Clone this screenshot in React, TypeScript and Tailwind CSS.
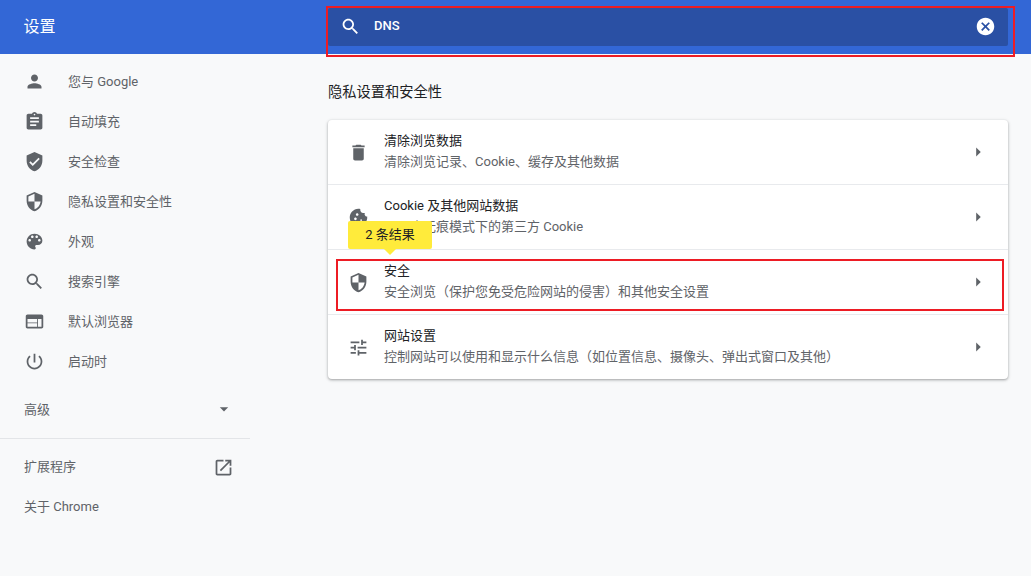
import React from 'react';

// material icon paths
const icons: Record<string, string> = {
  person: 'M12 12c2.21 0 4-1.79 4-4s-1.79-4-4-4-4 1.79-4 4 1.79 4 4 4zm0 2c-2.67 0-8 1.34-8 4v2h16v-2c0-2.66-5.33-4-8-4z',
  assignment: 'M19 3h-4.18C14.4 1.84 13.3 1 12 1c-1.3 0-2.4.84-2.82 2H5c-1.1 0-2 .9-2 2v14c0 1.1.9 2 2 2h14c1.1 0 2-.9 2-2V5c0-1.1-.9-2-2-2zm-7 0c.55 0 1 .45 1 1s-.45 1-1 1-1-.45-1-1 .45-1 1-1zm2 14H7v-2h7v2zm3-4H7v-2h10v2zm0-4H7V7h10v2z',
  verified: 'M12 1L3 5v6c0 5.55 3.84 10.74 9 12 5.16-1.26 9-6.45 9-12V5l-9-4zm-2 16l-4-4 1.41-1.41L10 14.17l6.59-6.59L18 9l-8 8z',
  security: 'M12 1L3 5v6c0 5.55 3.84 10.74 9 12 5.16-1.26 9-6.45 9-12V5l-9-4zm0 10.99h7c-.53 4.12-3.28 7.79-7 8.94V12H5V6.3l7-3.11v8.8z',
  palette: 'M12 3c-4.97 0-9 4.03-9 9s4.03 9 9 9c.83 0 1.5-.67 1.5-1.5 0-.39-.15-.74-.39-1.01-.23-.26-.38-.61-.38-.99 0-.83.67-1.5 1.5-1.5H16c2.76 0 5-2.24 5-5 0-4.42-4.03-8-9-8zm-5.5 9c-.83 0-1.5-.67-1.5-1.5S5.67 9 6.5 9 8 9.67 8 10.5 7.33 12 6.5 12zm3-4C8.67 8 8 7.33 8 6.5S8.67 5 9.5 5s1.5.67 1.5 1.5S10.33 8 9.5 8zm5 0c-.83 0-1.5-.67-1.5-1.5S13.67 5 14.5 5s1.5.67 1.5 1.5S15.33 8 14.5 8zm3 4c-.83 0-1.5-.67-1.5-1.5S16.67 9 17.5 9s1.5.67 1.5 1.5-.67 1.5-1.5 1.5z',
  search: 'M15.5 14h-.79l-.28-.27C15.41 12.59 16 11.11 16 9.5 16 5.91 13.09 3 9.5 3S3 5.91 3 9.5 5.91 16 9.5 16c1.61 0 3.09-.59 4.23-1.57l.27.28v.79l5 4.99L20.49 19l-4.99-5zm-6 0C7.01 14 5 11.99 5 9.5S7.01 5 9.5 5 14 7.01 14 9.5 11.99 14 9.5 14z',
  web: 'M20 4H4c-1.1 0-1.99.9-1.99 2L2 18c0 1.1.9 2 2 2h16c1.1 0 2-.9 2-2V6c0-1.1-.9-2-2-2zm-5 14H4v-4h11v4zm0-5H4V9h11v4zm5 5h-4V9h4v9z',
  power: 'M13 3h-2v10h2V3zm4.83 2.17l-1.42 1.42C17.99 7.86 19 9.81 19 12c0 3.87-3.13 7-7 7s-7-3.13-7-7c0-2.19 1.01-4.14 2.58-5.42L6.17 5.17C4.23 6.82 3 9.26 3 12c0 4.97 4.03 9 9 9s9-4.03 9-9c0-2.74-1.23-5.18-3.17-6.83z',
  openNew: 'M19 19H5V5h7V3H5c-1.11 0-2 .9-2 2v14c0 1.1.89 2 2 2h14c1.1 0 2-.9 2-2v-7h-2v7zM14 3v2h3.59l-9.83 9.83 1.41 1.41L19 6.41V10h2V3h-7z',
  trash: 'M6 19c0 1.1.9 2 2 2h8c1.1 0 2-.9 2-2V7H6v12zM19 4h-3.5l-1-1h-5l-1 1H5v2h14V4z',
  tune: 'M3 17v2h6v-2H3zM3 5v2h10V5H3zm10 16v-2h8v-2h-8v-2h-2v6h2zM7 9v2H3v2h4v2h2V9H7zm14 4v-2H11v2h10zm-6-4h2V7h4V5h-4V3h-2v6z',
  cancel: 'M12 2C6.47 2 2 6.47 2 12s4.47 10 10 10 10-4.47 10-10S17.53 2 12 2zm5 13.59L15.59 17 12 13.41 8.41 17 7 15.59 10.59 12 7 8.41 8.41 7 12 10.59 15.59 7 17 8.41 13.41 12 17 15.59z',
  cookie: 'M21.95 10.99c-1.79-.03-3.7-1.95-2.68-4.22-2.97 1-5.78-1.59-5.19-4.56C7.11.74 2 6.41 2 12c0 5.52 4.48 10 10 10 5.89 0 10.54-5.08 9.95-11.01zM8.5 15c-.83 0-1.5-.67-1.5-1.5S7.67 12 8.5 12s1.5.67 1.5 1.5S9.33 15 8.5 15zm2-5C9.67 10 9 9.33 9 8.5S9.67 7 10.5 7s1.5.67 1.5 1.5-.67 1.5-1.5 1.5zm4.5 6c-.55 0-1-.45-1-1s.45-1 1-1 1 .45 1 1-.45 1-1 1z',
  arrowRight: 'M10 17l5-5-5-5v10z',
  arrowDown: 'M7 10l5 5 5-5z',
};

const Icon = ({ name, className = 'h-[21px] w-[21px]' }: { name: string; className?: string }) => (
  <svg viewBox="0 0 24 24" fill="currentColor" className={`shrink-0 ${className}`}>
    <path d={icons[name]} />
  </svg>
);

const navItems = [
  { icon: 'person', label: '您与 Google' },
  { icon: 'assignment', label: '自动填充' },
  { icon: 'verified', label: '安全检查' },
  { icon: 'security', label: '隐私设置和安全性' },
  { icon: 'palette', label: '外观' },
  { icon: 'search', label: '搜索引擎' },
  { icon: 'web', label: '默认浏览器' },
  { icon: 'power', label: '启动时' },
];

const rows = [
  { icon: 'trash', title: '清除浏览数据', sub: '清除浏览记录、Cookie、缓存及其他数据' },
  { icon: 'cookie', title: 'Cookie 及其他网站数据', sub: '已阻止无痕模式下的第三方 Cookie' },
  { icon: 'security', title: '安全', sub: '安全浏览（保护您免受危险网站的侵害）和其他安全设置', hit: true },
  { icon: 'tune', title: '网站设置', sub: '控制网站可以使用和显示什么信息（如位置信息、摄像头、弹出式窗口及其他）' },
];

export default function App() {
  return (
    <div className="relative flex h-[576px] w-[1031px] flex-col overflow-hidden bg-[#f8f9fa] font-['Roboto','Noto_Sans_CJK_SC',sans-serif] text-[13px] text-[#5f6368]">
      <header className="flex h-[54px] shrink-0 bg-[#3367d6]">
        <div className="flex w-[328px] items-center pl-[23.5px] text-base text-white">设置</div>
        <div className="mt-2 flex h-[38px] w-[680px] items-center rounded-[2px] bg-[#2a50a4] pb-[2px] pl-[11.5px] pr-[12px] text-white">
          <Icon name="search" />
          <span className="ml-[13.5px] flex-1 font-medium">DNS</span>
          <Icon name="cancel" />
        </div>
      </header>
      {/* search highlight */}
      <div className="absolute left-[326px] top-[6px] h-[51px] w-[689px] border-2 border-[#ed1c24]" />

      <div className="flex flex-1">
        <nav className="w-[250px] shrink-0 pt-[7px]">
          {navItems.map((item) => (
            <div key={item.label} className="flex h-10 items-center pl-[23.5px]">
              <Icon name={item.icon} />
              <span className="ml-[23.5px] pt-[2px]">{item.label}</span>
            </div>
          ))}
          <div className="mt-2 flex h-10 items-center justify-between pl-6 pr-[16px]">
            <span className="pt-px">高级</span>
            <Icon name="arrowDown" className="h-5 w-5" />
          </div>
          <div className="mt-[9px] border-t border-[#e3e5e8]" />
          <div className="mt-2 flex h-10 items-center justify-between pl-6 pr-[16px]">
            <span className="pb-px">扩展程序</span>
            <Icon name="openNew" />
          </div>
          <div className="flex h-10 items-center pl-6">关于 Chrome</div>
        </nav>

        <main className="flex-1 pl-[78px]">
          <h2 className="mt-[27px] h-[39px] text-[14.25px] leading-[22px] text-[#202124]">隐私设置和安全性</h2>
          <section className="w-[680px] rounded-[4px] bg-white shadow-[0_1px_2px_rgba(60,64,67,0.3),0_1px_3px_1px_rgba(60,64,67,0.15)]">
            {rows.map((row, i) => (
              <div key={row.title} className={`relative flex items-center pl-[20px] pr-[19px] ${i === 0 ? 'h-[64px]' : 'h-[65px] border-t border-[#e8eaed]'}`}>
                <Icon name={row.icon} />
                <div className="ml-[15px] flex-1 leading-5">
                  <div className="mb-[2px] leading-[18px] text-[#202124]">{row.title}</div>
                  <div>{row.sub}</div>
                </div>
                <Icon name="arrowRight" className="h-[22px] w-[22px]" />
                {row.hit && (
                  <>
                    <div className="absolute left-2 right-1 top-[9px] h-[52px] border-2 border-[#ed1c24]" />
                    <div className="absolute left-5 top-[-29px] flex h-7 w-[84px] items-center justify-center rounded-[2px] bg-[#ffeb3b] text-[#202124]">
                      2 条结果
                      <div className="absolute left-1/2 top-full h-0 w-0 -translate-x-1/2 border-x-[6px] border-t-[6px] border-x-transparent border-t-[#ffeb3b]" />
                    </div>
                  </>
                )}
              </div>
            ))}
          </section>
        </main>
      </div>
    </div>
  );
}
